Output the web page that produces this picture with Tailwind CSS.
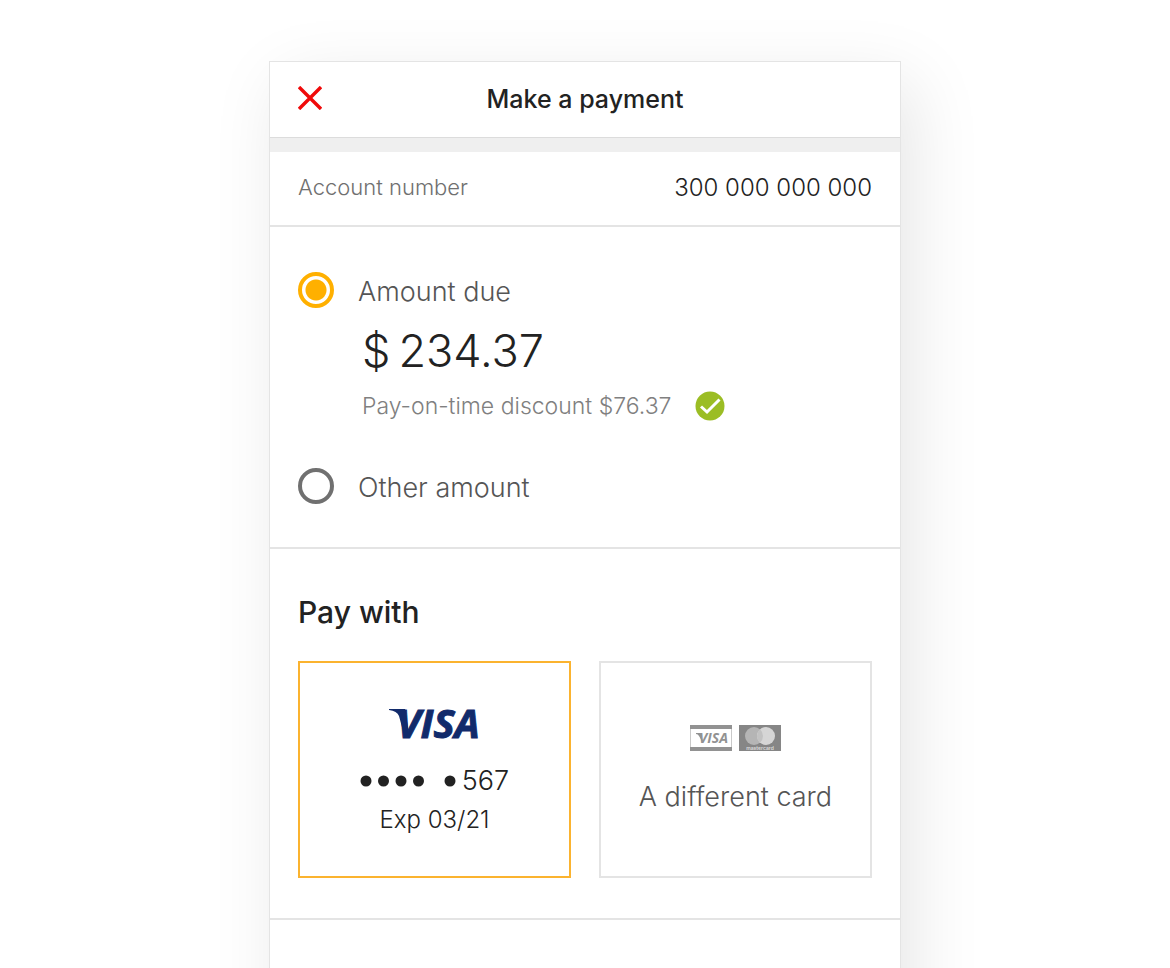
<!DOCTYPE html>
<html lang="en">
<head>
    <meta charset="UTF-8">
    <meta name="viewport" content="width=device-width, initial-scale=1.0">
    <title>Make a payment</title>
    <script src="https://cdn.jsdelivr.net/npm/@tailwindcss/browser@4"></script>
</head>
<body class="bg-white font-['Inter',sans-serif] text-[#222]">

    <main class="min-h-screen overflow-hidden flex flex-col items-center pt-[61px]">
        <form class="w-full max-w-[632px] flex-1 -mb-20 bg-white border border-[#e4e4e4] shadow-[12px_20px_66px_rgba(0,0,0,0.1)]">

            <!-- Title bar -->
            <header class="grid grid-cols-[1fr_auto_1fr] items-center h-[76px] px-7 border-b border-[#dcdcdc]">
                <button type="button" aria-label="Close" class="justify-self-start pb-1">
                    <svg class="w-6 h-6" viewBox="0 0 24 24" fill="none" stroke="#f00a0a" stroke-width="3.400">
                        <path d="M1 1L23 23M23 1L1 23"/>
                    </svg>
                </button>
                <h1 class="text-[25px] font-medium">Make a payment</h1>
            </header>
            <div class="h-[14px] bg-[#efefef]"></div>

            <dl class="flex items-center justify-between h-[75px] px-7 pb-0.5 border-b-2 border-[#e4e4e4] font-light">
                <dt class="text-[22px] text-[#707070]">Account number</dt>
                <dd class="text-[24px]">300 000 000 000</dd>
            </dl>

            <!-- Amount -->
            <section class="px-7 pt-[45px] pb-[43px] border-b-2 border-[#e4e4e4] font-light">
                <label class="flex items-center gap-6 h-9 text-[27px] text-[#555]">
                    <input type="radio" name="amount" checked class="appearance-none w-9 h-9 rounded-full border-4 border-[#707070] checked:border-[#ffb000] checked:bg-[radial-gradient(circle,#ffb000_10px,#fff_11px)]">
                    <span class="pt-1">Amount due</span>
                </label>
                <p class="flex gap-2 pl-16 mt-[13px] text-[45px] leading-[60px]"><span>$</span> <span>234.37</span></p>
                <p class="flex items-center gap-6 pl-16 mt-[7px] text-[23px] leading-9 text-[#808080]">
                    Pay-on-time discount $76.37
                    <svg class="w-[30px] h-[30px]" viewBox="0 0 30 30" fill="none">
                        <circle cx="15" cy="15" r="14.5" fill="#9bbd24"/>
                        <path d="M6 15.500L12 21L24.500 8.500" stroke="#fff" stroke-width="3"/>
                    </svg>
                </p>
                <label class="flex items-center gap-6 h-9 mt-11 text-[27px] text-[#555]">
                    <input type="radio" name="amount" class="appearance-none w-9 h-9 rounded-full border-4 border-[#707070] checked:border-[#ffb000] checked:bg-[radial-gradient(circle,#ffb000_10px,#fff_11px)]">
                    <span class="pt-1">Other amount</span>
                </label>
            </section>

            <!-- Payment method -->
            <section class="px-7 pt-[43px] pb-10 border-b-2 border-[#e4e4e4]">
                <h2 class="text-[30px] leading-10 font-medium">Pay with</h2>
                <div class="grid grid-cols-2 gap-7 mt-[29px] font-light">
                    <button type="button" class="flex flex-col items-center h-[217px] pt-11 border-2 border-[#fbb32f]">
                        <svg class="w-[92px] h-[32px] overflow-visible" viewBox="0 0 92 32" fill="#122b6b" role="img" aria-label="Visa">
                            <path d="M0 2H16L19 20L20 31H16L10 9Q8 4 0 3Z"/>
                            <text x="8" y="31" font-family="Open Sans" font-size="40" font-weight="700" font-style="italic" stroke="#122b6b" stroke-width="1">VISA</text>
                        </svg>
                        <span class="flex items-center mt-6 h-9 text-[27px]">
                            <svg class="w-[102px] h-3" viewBox="0 0 102 12" fill="#222">
                                <circle cx="6" cy="6" r="5.5"/>
                                <circle cx="23.500" cy="6" r="5.5"/>
                                <circle cx="41" cy="6" r="5.5"/>
                                <circle cx="58.500" cy="6" r="5.5"/>
                                <circle cx="90" cy="6" r="5.5"/>
                            </svg>
                            567
                        </span>
                        <span class="mt-[3px] text-[24px] leading-9">Exp 03/21</span>
                    </button>
                    <button type="button" class="flex flex-col items-center h-[217px] pt-[62px] border-2 border-[#e4e4e4] text-[#555]">
                        <span class="flex gap-[7px]">
                            <svg class="w-[42px] h-[26px]" viewBox="0 0 42 26" role="img" aria-label="Visa">
                                <rect width="42" height="26" fill="#929292"/>
                                <rect x="0.500" y="4" width="41" height="18" fill="#fff"/>
                                <path d="M6 8H11L13 18L9 11Q8 9 6 9Z" fill="#929292"/>
                                <text x="9" y="18" font-family="Open Sans" font-size="14" font-weight="700" font-style="italic" fill="#929292">VISA</text>
                            </svg>
                            <svg class="w-[42px] h-[26px]" viewBox="0 0 42 26" role="img" aria-label="Mastercard">
                                <rect width="42" height="26" fill="#868686"/>
                                <circle cx="15" cy="11" r="9" fill="#b5b5b5"/>
                                <circle cx="27" cy="11" r="9" fill="#d6d6d6"/>
                                <path d="M21 4.300A9 9 0 0 1 21 17.700A9 9 0 0 1 21 4.300Z" fill="#c2c2c2"/>
                                <text x="21" y="24.500" text-anchor="middle" font-family="Inter" font-size="5" font-weight="600" fill="#ddd">mastercard</text>
                            </svg>
                        </span>
                        <span class="mt-7 text-[27px] leading-9">A different card</span>
                    </button>
                </div>
            </section>
        </form>
    </main>

</body>
</html>
